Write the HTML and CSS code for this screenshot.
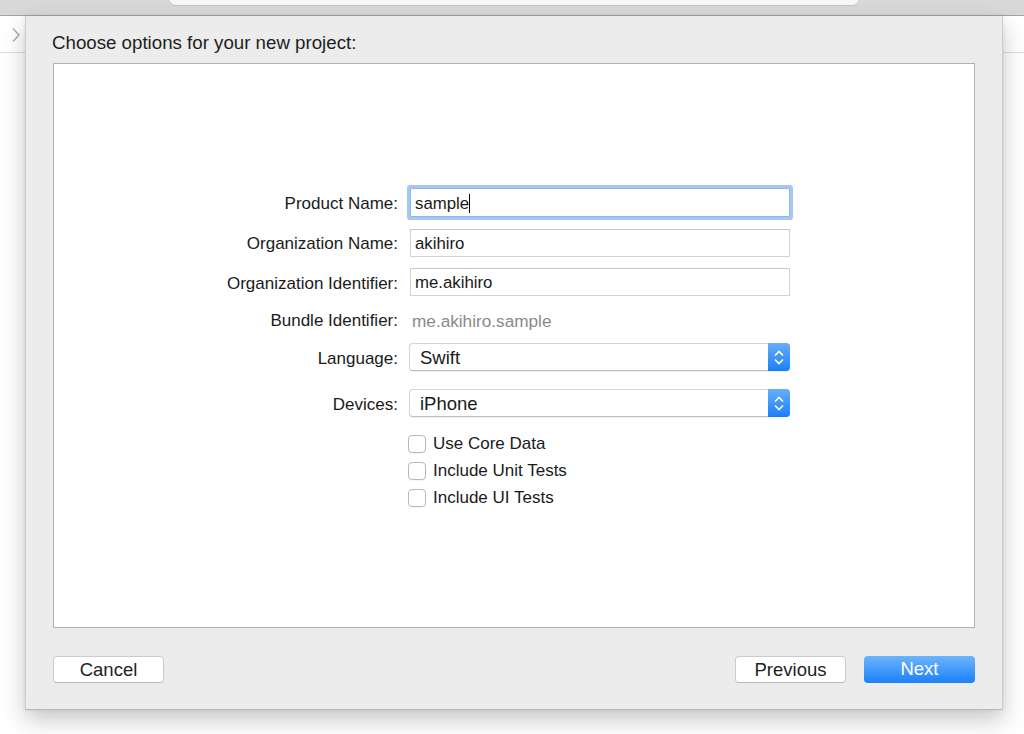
FILE: index.html
```html
<!DOCTYPE html>
<html>
<head>
<meta charset="utf-8">
<link rel="stylesheet" href="styles.css">
</head>
<body>
<div class="topbar"><div class="titlefield"></div></div>
<div class="main">
  <div class="side side-left">
    <svg class="chev" width="10" height="16" viewBox="0 0 10 16"><path d="M2 1.5 L8 8 L2 14.5" fill="none" stroke="#a9a9a9" stroke-width="1.4"/></svg>
  </div>
  <div class="sheet">
    <div class="title">Choose options for your new project:</div>
    <div class="box">
      <div class="form">
        <div class="row r1">
          <div class="label">Product Name:</div>
          <div class="field focus"><span class="caret">sample</span></div>
        </div>
        <div class="row r2">
          <div class="label">Organization Name:</div>
          <div class="field">akihiro</div>
        </div>
        <div class="row r3">
          <div class="label">Organization Identifier:</div>
          <div class="field">me.akihiro</div>
        </div>
        <div class="row r4">
          <div class="label">Bundle Identifier:</div>
          <div class="static">me.akihiro.sample</div>
        </div>
        <div class="row r5">
          <div class="label">Language:</div>
          <div class="popup"><span class="ptext">Swift</span>
            <span class="stepper"><svg width="22" height="27" viewBox="0 0 22 27"><path d="M7 11.5 L11 7.5 L15 11.5" fill="none" stroke="#fff" stroke-width="1.6"/><path d="M7 15.5 L11 19.5 L15 15.5" fill="none" stroke="#fff" stroke-width="1.6"/></svg></span>
          </div>
        </div>
        <div class="row r6">
          <div class="label">Devices:</div>
          <div class="popup"><span class="ptext">iPhone</span>
            <span class="stepper"><svg width="22" height="27" viewBox="0 0 22 27"><path d="M7 11.5 L11 7.5 L15 11.5" fill="none" stroke="#fff" stroke-width="1.6"/><path d="M7 15.5 L11 19.5 L15 15.5" fill="none" stroke="#fff" stroke-width="1.6"/></svg></span>
          </div>
        </div>
        <div class="row c1">
          <div></div>
          <div class="check"><span class="box-c"></span>Use Core Data</div>
        </div>
        <div class="row c2">
          <div></div>
          <div class="check"><span class="box-c"></span>Include Unit Tests</div>
        </div>
        <div class="row c3">
          <div></div>
          <div class="check"><span class="box-c"></span>Include UI Tests</div>
        </div>
      </div>
    </div>
    <div class="buttons">
      <div class="btn">Cancel</div>
      <div class="right">
        <div class="btn">Previous</div>
        <div class="btn primary">Next</div>
      </div>
    </div>
  </div>
  <div class="side side-right"></div>
</div>
</body>
</html>
```

FILE: styles.css
```css
html, body {
  margin: 0;
  padding: 0;
  background: #fff;
  font-family: "Liberation Sans", Arial, sans-serif;
  color: #1a1a1a;
  overflow: hidden;
}
.topbar {
  height: 15px;
  background: #d8d8d8;
  border-bottom: 1px solid #a3a3a3;
}
.titlefield {
  margin-left: 170px;
  width: 688px;
  height: 5px;
  background: #f7f7f7;
  border-radius: 0 0 6px 6px;
  box-shadow: 0 1px 0 #c4c4c4;
}
.main {
  display: flex;
  height: 718px;
}
.side {
  height: 37px;
  border-bottom: 1px solid #dcdcdc;
  box-sizing: border-box;
}
.side-left {
  width: 25px;
  flex: none;
  display: flex;
  align-items: center;
  padding-left: 11px;
  box-sizing: border-box;
  padding-top: 2px;
}
.side-right {
  flex: 1;
}
.sheet {
  width: 978px;
  flex: none;
  height: 694px;
  box-sizing: border-box;
  background: #ececec;
  border-left: 1px solid #cdcdcd;
  border-right: 1px solid #cdcdcd;
  border-bottom: 1px solid #b9b9b9;
  box-shadow: 0 10px 22px rgba(0, 0, 0, 0.22), 0 0 4px rgba(0,0,0,0.08);
  padding: 0 27px;
  position: relative;
  z-index: 1;
}
.title {
  margin-top: 16px;
  height: 22px;
  line-height: 22px;
  font-size: 18.7px;
  color: #1e1e1e;
  margin-left: -1px;
}
.box {
  margin-top: 9px;
  height: 565px;
  box-sizing: border-box;
  background: #fff;
  border: 1px solid #b1b1b1;
  padding-top: 118px;
}
.form {
  display: flex;
  flex-direction: column;
}
.row {
  display: grid;
  grid-template-columns: 344px 380px;
  column-gap: 12px;
  align-items: center;
}
.r1 { height: 40px; }
.r2 { height: 41px; }
.r3 { height: 38px; }
.r4 { height: 38px; }
.r5 { height: 36px; }
.r6 { height: 36px; margin-top: 10px; }
.c1 { height: 26px; margin-top: 10px; }
.c2 { height: 27px; }
.c3 { height: 27px; }
.label {
  text-align: right;
  font-size: 17px;
  line-height: 20px;
  padding-top: 3px;
  color: #1a1a1a;
}
.r4 .label { padding-top: 1px; }
.field {
  height: 28px;
  box-sizing: border-box;
  border: 1px solid #d2d2d2;
  border-top-color: #c6c6c6;
  background: #fff;
  font-size: 16.8px;
  line-height: 28px;
  padding-left: 4px;
  color: #1a1a1a;
}
.field.focus {
  height: 29px;
  line-height: 29px;
  border-color: #8fb5e6;
  box-shadow: 0 0 0 3px #a3c8f4;
  border-radius: 1px;
}
.caret {
  border-right: 1px solid #000;
  padding-right: 0;
}
.static {
  font-size: 17.2px;
  line-height: 20px;
  padding-top: 1px;
  color: #8a8a8a;
  padding-left: 2px;
}
.popup {
  margin-left: -1px;
  height: 28px;
  box-sizing: border-box;
  background: #fff;
  border: 1px solid #d4d4d4;
  border-bottom-color: #bdbdbd;
  border-radius: 4px;
  display: flex;
  align-items: center;
  justify-content: space-between;
  box-shadow: 0 1px 1px rgba(0,0,0,0.06);
}
.ptext {
  font-size: 18.5px;
  line-height: 22px;
  padding-top: 2px;
  padding-left: 10px;
  color: #1a1a1a;
}
.stepper {
  width: 22px;
  height: 28px;
  margin: -1px -1px -1px 0;
  border-radius: 0 4px 4px 0;
  background: linear-gradient(#66aef9, #1b7ff9);
  display: flex;
  align-items: center;
  justify-content: center;
}
.check {
  display: flex;
  align-items: center;
  font-size: 17px;
  margin-left: -2px;
  color: #1a1a1a;
}
.box-c {
  width: 18px;
  height: 18px;
  box-sizing: border-box;
  border: 1px solid #b8b8b8;
  border-radius: 4px;
  background: #fff;
  margin-right: 7px;
  box-shadow: 0 1px 0 rgba(0,0,0,0.04);
}
.buttons {
  margin-top: 28px;
  display: flex;
  justify-content: space-between;
}
.right {
  display: flex;
  gap: 18px;
}
.btn {
  width: 111px;
  height: 27px;
  box-sizing: border-box;
  border: 1px solid #cbcbcb;
  border-bottom-color: #b9b9b9;
  border-radius: 4px;
  background: #fff;
  text-align: center;
  line-height: 25px;
  font-size: 18.5px;
  color: #1e1e1e;
}
.btn.primary {
  border: none;
  line-height: 26px;
  background: linear-gradient(#6cb4fa, #1b80fb);
  color: #fff;
}
```
